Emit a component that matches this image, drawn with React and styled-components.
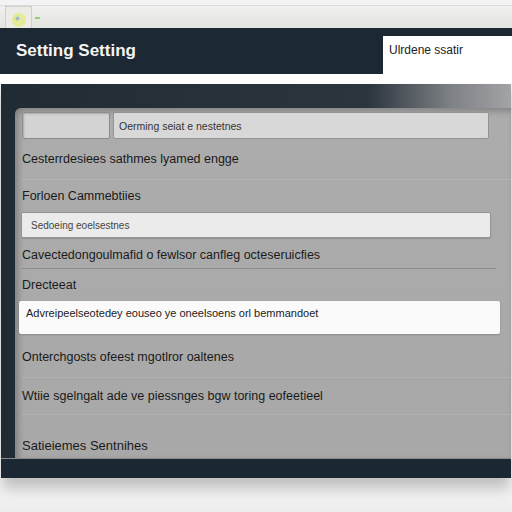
import styled, { createGlobalStyle } from 'styled-components';

const GlobalStyle = createGlobalStyle`
  html, body {
    margin: 0;
    padding: 0;
    background: #f6f6f6;
    font-family: "Liberation Sans", Arial, sans-serif;
  }
`;

const Page = styled.div`
  width: 512px;
  height: 512px;
  overflow: hidden;
  background: linear-gradient(to bottom, #f3f3f3 0%, #ffffff 92%, #ececec 100%);
  position: relative;
`;

const TabStrip = styled.div`
  height: 22px;
  margin-top: 5px;
  background: linear-gradient(to bottom, #f0f0ee, #e3e3e0);
  border-top: 1px solid #dcdcdc;
  display: flex;
  align-items: flex-end;
  padding-left: 5px;
  gap: 3px;
`;

const Tab = styled.div`
  width: 25px;
  height: 21px;
  background: #ecebe6;
  border: 1px solid #cfcfcb;
  border-bottom: none;
  display: flex;
  align-items: flex-end;
  justify-content: center;
`;

const Header = styled.header`
  height: 46px;
  background: #1c2833;
  display: flex;
  align-items: center;
  padding-left: 16px;
`;

const Title = styled.h1`
  margin: 0;
  font-size: 17px;
  font-weight: 700;
  color: #f4f4f4;
`;

const SearchBox = styled.div`
  position: absolute;
  top: 36px;
  right: 0;
  width: 129px;
  height: 47px;
  background: #ffffff;
  padding: 7px 0 0 6px;
  box-sizing: border-box;
  font-size: 12px;
  color: #222;
`;

const Gap = styled.div`
  height: 10px;
  background: #ffffff;
`;

const Panel = styled.section`
  margin: 0 1px 0 1px;
  background: linear-gradient(90deg, #202b34 0%, #2b353d 72%, #7d8085 88%, #a2a3a5 100%);
  padding: 24px 0 0 14px;
  box-shadow: 0 10px 14px rgba(0, 0, 0, 0.25);
`;

const Inner = styled.div`
  background: linear-gradient(to bottom, #acacac, #a8a8a8);
  border-radius: 6px 0 0 0;
  box-shadow: inset 3px 3px 6px rgba(0, 0, 0, 0.25);
  padding: 4px 0 0 7px;
  display: flex;
  flex-direction: column;
`;

const InputRow = styled.div`
  display: flex;
  gap: 3px;
  height: 27px;
  margin-right: 22px;
`;

const SmallBox = styled.div`
  width: 88px;
  background: #d3d3d3;
  border: 1px solid #8c8c8c;
  border-radius: 2px;
  box-shadow: inset 1px 1px 2px rgba(0, 0, 0, 0.2);
  box-sizing: border-box;
`;

const Field = styled.div`
  flex: 1;
  display: flex;
  align-items: center;
  padding-left: 5px;
  box-sizing: border-box;
  background: ${p => p.$bg || '#d8d8d8'};
  border: 1px solid #939393;
  border-radius: 2px;
  font-size: 10.5px;
  color: ${p => p.$color || '#333'};
`;

const Line = styled.div`
  height: ${p => p.$h}px;
  box-sizing: border-box;
  display: flex;
  align-items: ${p => (p.$bottom ? 'flex-end' : 'center')};
  padding-top: ${p => p.$pt || 0}px;
  padding-bottom: ${p => p.$pb || 0}px;
  margin-right: ${p => p.$mr || 0}px;
  font-size: ${p => p.$size || 12.5}px;
  font-weight: ${p => p.$weight || 400};
  color: #1a1a1a;
  border-bottom: ${p => p.$rule || 'none'};
`;

const Field2 = styled(Field)`
  flex: none;
  height: 26px;
  margin-left: -1px;
  margin-right: 20px;
  padding-left: 9px;
  font-size: 10px;
  box-shadow: 0 1px 1px rgba(0, 0, 0, 0.15);
`;

const Notice = styled.div`
  height: 33px;
  margin-left: -3px;
  margin-right: 11px;
  background: #fafafa;
  border-radius: 2px;
  box-shadow: 0 1px 2px rgba(0, 0, 0, 0.2);
  padding: 6px 0 0 7px;
  box-sizing: border-box;
  font-size: 11px;
  color: #222;
`;

const Footer = styled.div`
  height: 19px;
  margin-left: -14px;
  background: #1b2732;
  border-top: 1px solid #8a8a86;
`;

export default function App() {
  return (
    <Page>
      <GlobalStyle />
      <TabStrip>
        <Tab>
          <svg width="16" height="16" viewBox="0 0 16 16">
            <circle cx="8" cy="8" r="7" fill="#e4ea98" />
            <circle cx="6.5" cy="6.5" r="2" fill="#a6b8cc" />
          </svg>
        </Tab>
        <svg width="6" height="16" viewBox="0 0 6 16">
          <rect x="0" y="5" width="5" height="2" fill="#8fd07a" />
        </svg>
      </TabStrip>
      <Header>
        <Title>Setting Setting</Title>
      </Header>
      <SearchBox>Ulrdene ssatir</SearchBox>
      <Gap />
      <Panel>
        <Inner>
          <InputRow>
            <SmallBox />
            <Field>Oerming seiat e nestetnes</Field>
          </InputRow>
          <Line $h={41} $rule="1px solid #b3b3b3">Cesterrdesiees sathmes lyamed engge</Line>
          <Line $h={32}>Forloen Cammebtiies</Line>
          <Field2 $bg="#ebebeb" $color="#444">Sedoeing eoelsestnes</Field2>
          <Line $h={31} $pt={4} $mr={15} $rule="1px solid #8c8c8c">Cavectedongoulmafid o fewlsor canfleg octeseruicfies</Line>
          <Line $h={32}>Drecteeat</Line>
          <Notice>Advreipeelseotedey eouseo ye oneelsoens orl bemmandoet</Notice>
          <Line $h={44} $pt={2} $rule="1px solid #b1b1b1">Onterchgosts ofeest mgotlror oaltenes</Line>
          <Line $h={37} $rule="1px solid #b1b1b1">Wtiie sgelngalt ade ve piessnges bgw toring eofeetieel</Line>
          <Line $h={43} $bottom $pb={5} $size={13} $weight={500}>Satieiemes Sentnihes</Line>
        </Inner>
        <Footer />
      </Panel>
    </Page>
  );
}
